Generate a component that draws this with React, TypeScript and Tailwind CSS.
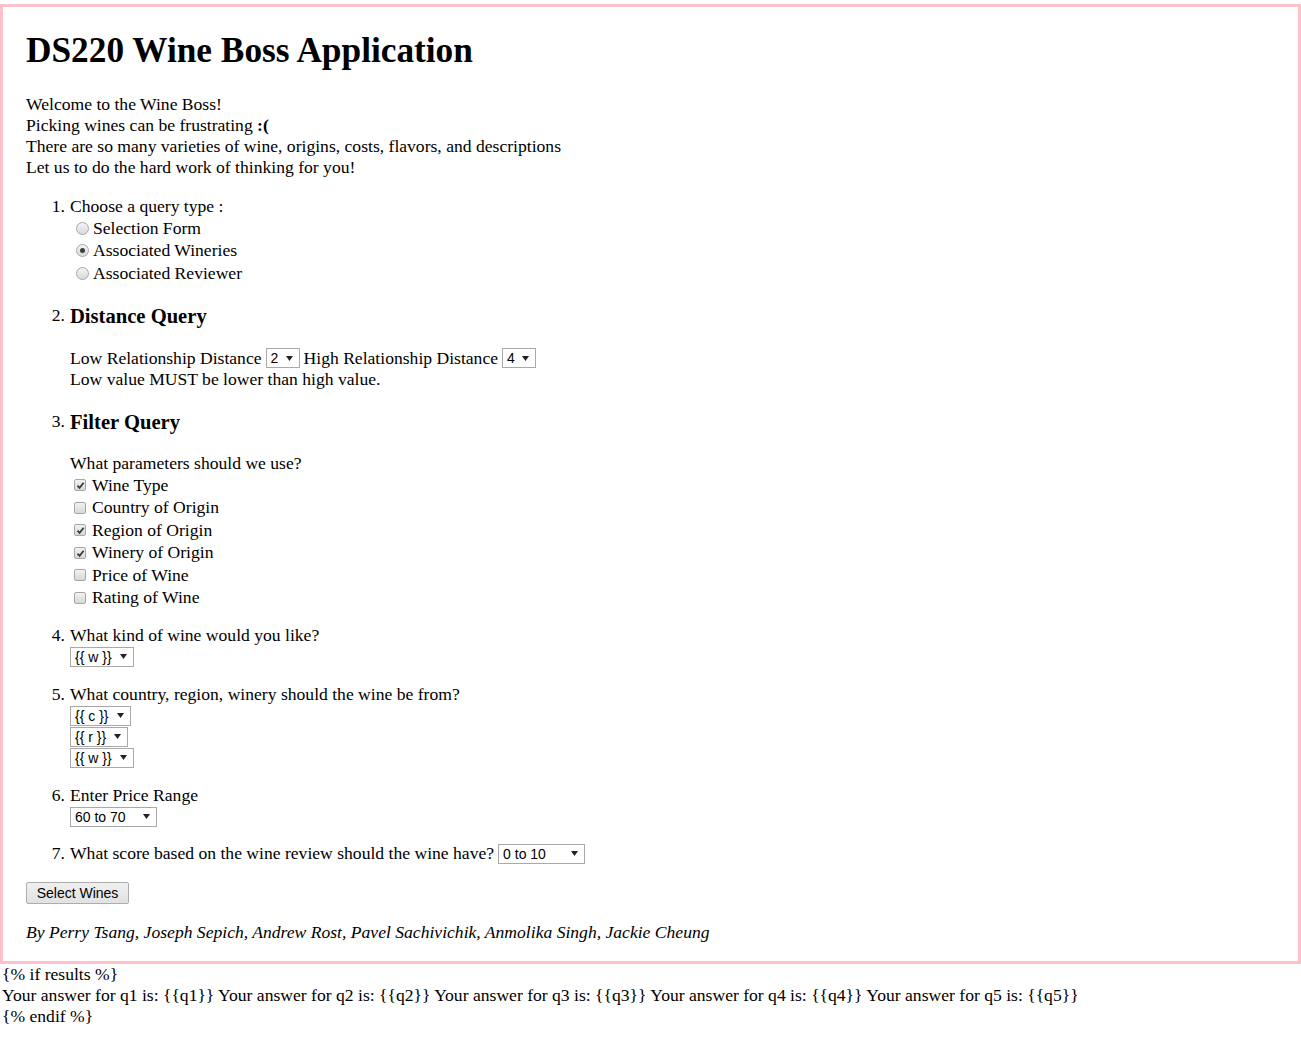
import React from "react";

const Radio = ({ checked }: { checked?: boolean }) => (
  <span className="relative inline-block w-[13px] h-[13px] rounded-full border border-[#a6a6a6] bg-gradient-to-b from-[#f4f4f4] to-[#dadada] shrink-0">
    {checked && (
      <span className="absolute left-[3px] top-[3px] w-[5px] h-[5px] rounded-full bg-[#3d3d3d]" />
    )}
  </span>
);

const Check = ({ checked }: { checked?: boolean }) => (
  <span className="relative inline-block w-[12px] h-[12px] rounded-[2px] border border-[#a6a6a6] bg-gradient-to-b from-[#f2f2f2] to-[#d8d8d8] shrink-0">
    {checked && (
      <svg className="absolute left-[1px] top-[1px]" width="9" height="9" viewBox="0 0 9 9">
        <path d="M1.5 4.6 L3.6 6.8 L7.6 1.8" stroke="#3a3a3a" strokeWidth="1.8" fill="none" />
      </svg>
    )}
  </span>
);

const Select = ({ label, w }: { label: string; w: string }) => (
  <span
    className={`inline-flex items-center justify-between h-[20px] border border-[#a9a9a9] bg-white pl-[4px] pr-[6px] align-middle font-['Liberation_Sans',Arial,sans-serif] text-[14px] leading-[18px] text-black ${w}`}
  >
    <span className="whitespace-pre">{label}</span>
    <svg width="7" height="5" viewBox="0 0 7 5">
      <path d="M0 0 L7 0 L3.5 5 Z" fill="#222" />
    </svg>
  </span>
);

const Item = ({ n, children }: { n: string; children: React.ReactNode }) => (
  <div className="flex">
    <div className="w-[44px] shrink-0 text-right pr-[5px] leading-[21px]">{n}</div>
    <div className="flex-1">{children}</div>
  </div>
);

export default function App() {
  return (
    <div className="font-['Liberation_Serif','Times_New_Roman',serif] text-[17.6px] text-black bg-white min-h-[1039px]">
      <div className="mt-[4px] border-[3px] border-[#ffc0cb] pl-[23px] pt-[24px] pb-[18px]">
        <h1 className="text-[35.3px] font-bold leading-[40px]">DS220 Wine Boss Application</h1>
        <div className="mt-[23px] leading-[21px]">
          <div>Welcome to the Wine Boss!</div>
          <div>
            Picking wines can be frustrating <b>:(</b>
          </div>
          <div>There are so many varieties of wine, origins, costs, flavors, and descriptions</div>
          <div>Let us to do the hard work of thinking for you!</div>
        </div>

        <div className="mt-[18px]">
          <Item n="1.">
            <div className="leading-[21px]">Choose a query type :</div>
            <div className="pl-[6px]">
              {["Selection Form", "Associated Wineries", "Associated Reviewer"].map((t, i) => (
                <div key={t} className="flex items-center h-[22.5px] gap-[4px]">
                  <Radio checked={i === 1} />
                  <span className="leading-[21px]">{t}</span>
                </div>
              ))}
            </div>
          </Item>

          <div className="mt-[20px]">
            <Item n="2.">
              <div className="text-[20.6px] font-bold leading-[22px]">Distance Query</div>
              <div className="mt-[21px] flex items-center h-[21px] gap-[4px]">
                <span>Low Relationship Distance</span>
                <Select label="2" w="w-[34px]" />
                <span>High Relationship Distance</span>
                <Select label="4" w="w-[34px]" />
              </div>
              <div className="leading-[21px]">Low value MUST be lower than high value.</div>
            </Item>
          </div>

          <div className="mt-[21px]">
            <Item n="3.">
              <div className="text-[20.6px] font-bold leading-[22px]">Filter Query</div>
              <div className="mt-[20.5px] leading-[21px]">What parameters should we use?</div>
              <div className="pl-[4px]">
                {[
                  ["Wine Type", true],
                  ["Country of Origin", false],
                  ["Region of Origin", true],
                  ["Winery of Origin", true],
                  ["Price of Wine", false],
                  ["Rating of Wine", false],
                ].map(([t, c]) => (
                  <div key={t as string} className="flex items-center h-[22.5px] gap-[6px]">
                    <Check checked={c as boolean} />
                    <span className="leading-[21px]">{t as string}</span>
                  </div>
                ))}
              </div>
            </Item>
          </div>

          <div className="mt-[16px]">
            <Item n="4.">
              <div className="leading-[21px]">What kind of wine would you like?</div>
              <div className="h-[21px] flex items-center">
                <Select label="{{ w }}" w="w-[64px]" />
              </div>
            </Item>
          </div>

          <div className="mt-[17px]">
            <Item n="5.">
              <div className="leading-[21px]">What country, region, winery should the wine be from?</div>
              <div className="h-[21px] flex items-center">
                <Select label="{{ c }}" w="w-[61px]" />
              </div>
              <div className="h-[21px] flex items-center">
                <Select label="{{ r }}" w="w-[58px]" />
              </div>
              <div className="h-[21px] flex items-center">
                <Select label="{{ w }}" w="w-[64px]" />
              </div>
            </Item>
          </div>

          <div className="mt-[17px]">
            <Item n="6.">
              <div className="leading-[21px]">Enter Price Range</div>
              <div className="h-[21px] flex items-center">
                <Select label="60 to 70" w="w-[87px]" />
              </div>
            </Item>
          </div>

          <div className="mt-[16px]">
            <Item n="7.">
              <div className="flex items-center h-[21px] gap-[4px]">
                <span>What score based on the wine review should the wine have?</span>
                <Select label="0 to 10" w="w-[87px]" />
              </div>
            </Item>
          </div>
        </div>

        <button className="mt-[18px] block h-[22px] w-[103px] rounded-[2px] border border-[#adadad] bg-gradient-to-b from-[#f0f0f0] to-[#e1e1e1] font-['Liberation_Sans',Arial,sans-serif] text-[14px] leading-[20px] text-black">
          Select Wines
        </button>

        <div className="mt-[17.5px] italic leading-[21px]">
          By Perry Tsang, Joseph Sepich, Andrew Rost, Pavel Sachivichik, Anmolika Singh, Jackie Cheung
        </div>
      </div>
      <div className="pl-[2px] leading-[21px]">
        <div>{"{% if results %}"}</div>
        <div>
          {
            "Your answer for q1 is: {{q1}} Your answer for q2 is: {{q2}} Your answer for q3 is: {{q3}} Your answer for q4 is: {{q4}} Your answer for q5 is: {{q5}}"
          }
        </div>
        <div>{"{% endif %}"}</div>
      </div>
    </div>
  );
}
